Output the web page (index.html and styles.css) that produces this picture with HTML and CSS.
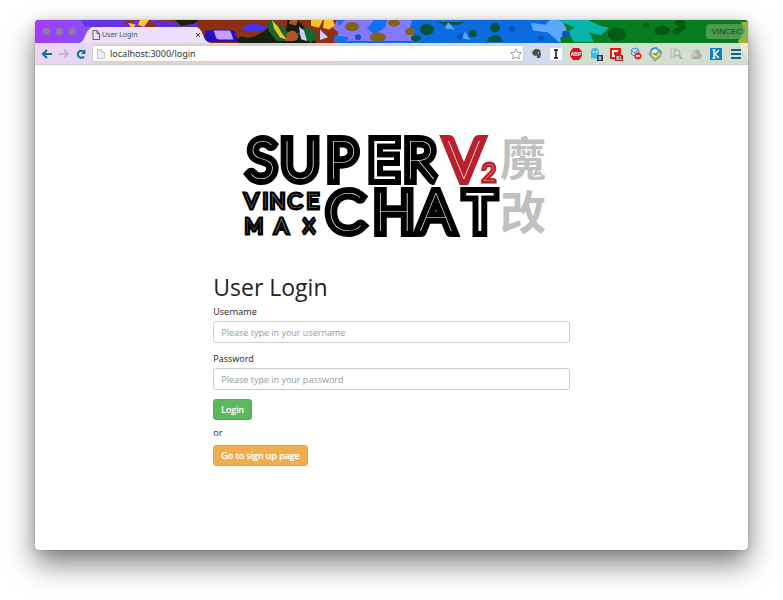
FILE: index.html
```html
<!DOCTYPE html>
<html lang="en">
<head>
<meta charset="utf-8">
<title>User Login</title>
<link rel="stylesheet" href="styles.css">
</head>
<body>
<div class="window">
  <header class="chrome">
    <svg class="theme" viewBox="0 0 713 46" preserveAspectRatio="none" aria-hidden="true">
      <defs>
        <linearGradient id="purple"><stop offset="0" stop-color="#a43cf5"/><stop offset="1" stop-color="#7a55ff"/></linearGradient>
      </defs>
      <rect width="713" height="46" fill="#0b6be0"/>
      <rect width="75" height="46" fill="url(#purple)"/>
      <path d="M60 0H302V46H60z" fill="#8c2f12"/>
      <path d="M46 0h34l8 5 14-5 10 4 15-4h-10l-7 7H50zM66 0h26l-7 7-8 2z" fill="#6632e8"/>
      <path d="M93 3l8 2-4 4zM105 0h9l-5 7-6-2zM289 0h9l2 6-6 4-6-2z" fill="#ffc72c"/>
      <path d="M120 3q14-5 22 1t14 0 8 6-18 3-26-4z" fill="#5a2fd8"/>
      <path d="M168 22l6 1h30l-5-12h-28z" fill="#2410c0"/>
      <path d="M207 8q9-6 17-3l8 2-5 5-17 0z" fill="#4633f2"/>
      <path d="M140 0h24l-5 4-13 2zM202 20q4-4 8-2t12-2 10-7 10 5 10-10 20 7 13 14l-15 10h-60z" fill="#17200d"/>
      <path d="M232 2q6-3 12 3t10 8l-4 9h-8l-8-10zM262 14l10-8 11 10-7 8z" fill="#17672b"/>
      <path d="M237 0l6 7 4 7 5 7-7-3-6-9zM276 0h12l-4 8-8-2z" fill="#f4c522"/>
      <path d="M252 14q6-6 10 0t-3 8h-9zM255 0h8l-2 6-7-2z" fill="#a8562a"/>
      <path d="M264 7l5 4 3 11-6-2zM285 10l8 8-8 3z" fill="#d1cafa"/>
      <path d="M302 0h75l-3 12 12 10h-86l4-9-6-4z" fill="#8579fb"/>
      <path d="M302 0h8l-6 6zM300 16l14 2-4 5h-12zM332 9l7-9h13l-2 8-10 7z" fill="#176eee"/>
      <g fill="#80621d"><ellipse cx="317" cy="7" rx="7" ry="5"/><ellipse cx="343" cy="18" rx="8" ry="5"/><ellipse cx="359" cy="3" rx="6" ry="4"/><ellipse cx="375" cy="12" rx="5" ry="4"/></g>
      <g fill="#07543a"><ellipse cx="392" cy="10" rx="7" ry="6"/><ellipse cx="381" cy="19" rx="5" ry="3"/><circle cx="438" cy="14" r="4"/><circle cx="460" cy="8" r="5"/><path d="M452 23q2-7 8-7t8 7zM403 2h26l-4 3h-17z"/></g>
      <path d="M413 2l7 8-10-1zM430 12l5 9-8-2zM496 3l14 2 5-5h13l9 9 4 12-17 2-11-10-15-2z" fill="#5aa8ff"/>
      <path d="M527 0H713V46H532l-7-27 8-6z" fill="#087d20"/>
      <path d="M522 0h31l12 6 9 2-8 8-12-3 5 10h-20l-6-11 7-4z" fill="#07b3aa"/>
      <g fill="#075815"><ellipse cx="582" cy="15" rx="9" ry="7"/><ellipse cx="627" cy="11" rx="8" ry="5"/><ellipse cx="645" cy="3" rx="6" ry="3"/><ellipse cx="611" cy="5" rx="3" ry="2"/><path d="M636 12l12-8 4 4-10 8z"/></g>
      <path d="M706 2h7v40l-10-20 7-10z" fill="#a7b330"/>
      <g fill="#0755b8"><circle cx="323" cy="18" r="3"/><circle cx="425" cy="17" r="3"/><circle cx="477" cy="9" r="3"/><circle cx="506" cy="19" r="3"/><circle cx="531" cy="15" r="4"/></g>
    </svg>
    <div class="tabs">
      <div class="lights"><i></i><i></i><i></i></div>
      <div class="tab">
        <svg class="tabshape" viewBox="0 0 132 17" preserveAspectRatio="none" aria-hidden="true"><path d="M0 17Q4 16 6 10T13 1H117Q121 1 124 9T132 17z" fill="#ece0f8"/></svg>
        <svg class="doc" viewBox="0 0 8 10" aria-hidden="true"><path d="M1 .5h4l2.500 3v6H1zM5 .5v3h2.500" fill="none" stroke="#655d6c"/></svg>
        <span class="tabname">User Login</span>
        <button class="close" aria-label="Close tab"><svg viewBox="0 0 6 6"><path d="M1 1l4 4M5 1L1 5" stroke="#4c4650"/></svg></button>
      </div>
      <button class="newtab" aria-label="New tab"><svg viewBox="0 0 24 12"><path d="M2 1h16q2 0 3 4l2 6H8q-3 0-4-4z" fill="#c79dff" stroke="#2c13c9"/></svg></button>
      <span class="profile">VINCEC</span>
    </div>
    <div class="toolbar">
      <button aria-label="Back"><svg viewBox="0 0 12 12"><path d="M11 6H2M6 2L2 6l4 4" fill="none" stroke="#08749b" stroke-width="2"/></svg></button>
      <button aria-label="Forward"><svg viewBox="0 0 12 12"><path d="M1 6h9M6 2l4 4-4 4" fill="none" stroke="#c4b6d0" stroke-width="2"/></svg></button>
      <button aria-label="Reload"><svg viewBox="0 0 12 12"><path d="M9 4A3.500 3.500 0 1 0 9 8.500" fill="none" stroke="#08749b" stroke-width="2"/><path d="M10.500 1v5H6z" fill="#08749b"/></svg></button>
      <div class="address">
        <svg class="doc" viewBox="0 0 8 10" aria-hidden="true"><path d="M.5.500h4l3 3v6h-7zM4.500.500v3h3" fill="#eee" stroke="#c4c4c4"/></svg>
        <input class="url" aria-label="Address" value="localhost:3000/login">
        <svg class="star" viewBox="0 0 12 12"><path d="M6 .8l1.600 3.400 3.700.5-2.700 2.600.7 3.700L6 9.200 2.700 11l.7-3.700L.7 4.700l3.700-.5z" fill="#fff" stroke="#a2a2a2"/></svg>
      </div>
      <div class="extensions">
        <svg viewBox="0 0 14 14"><path d="M3 5l3-3h3l2 1 1 4-1 4H8V9l1-1-2 1-3-1z" fill="#4b5149"/><path d="M9 6h1" stroke="#fff"/></svg>
        <svg viewBox="0 0 14 14"><path d="M1 1h12v12H1z" fill="#fff"/><path d="M5 3h4M7 3v8M5 11h4" stroke="#111" stroke-width="1.500"/></svg>
        <svg viewBox="0 0 14 14"><path d="M4 1h6l3 4v4l-3 4H4L1 9V5z" fill="#d3101c"/><text class="badge" x="7" y="9">ABP</text></svg>
        <svg viewBox="0 0 14 14"><path d="M2 12V5a4 4 0 0 1 8 0v7l-2-1-2 1-2-1z" fill="#42b9e9"/><path d="M4 5h1.500M7 5h1.500" stroke="#fff" stroke-width="1.500"/><rect x="8" y="8" width="6" height="6" fill="#3c344e"/><text class="badge" x="11" y="13">0</text></svg>
        <svg viewBox="0 0 14 14"><path d="M1 1h11v11H1z" fill="#dc1b13"/><path d="M9 4H4v5h4" fill="none" stroke="#fff" stroke-width="2"/><rect x="6" y="8" width="8" height="6" fill="#b71920"/><text class="badge" x="10" y="13">81</text></svg>
        <svg viewBox="0 0 14 14"><circle cx="6" cy="5" r="4" fill="#b9def5" stroke="#438fc5"/><path d="M3 4l3 2 3-3" fill="none" stroke="#438fc5"/><circle cx="9" cy="9" r="3.500" fill="#df2434"/><path d="M7 9h4" stroke="#fff" stroke-width="1.500"/></svg>
        <svg viewBox="0 0 14 14"><path d="M3 2l4-1 5 4-1 4-5 4-5-6z" fill="#fff" stroke="#4c8fd0" stroke-width="2" stroke-linejoin="round"/><path d="M2 7l4 5 6-5" fill="none" stroke="#e6b42d" stroke-width="2"/><path d="M4 6l3 2 4-5" fill="none" stroke="#50aa64" stroke-width="2"/></svg>
        <svg viewBox="0 0 14 14"><path d="M8 2H2v8h5" fill="none" stroke="#bbb8ab"/><circle cx="8" cy="6" r="3" fill="none" stroke="#aaa99e"/><path d="M10 8l3 4" stroke="#aaa99e" stroke-width="2"/></svg>
        <svg viewBox="0 0 14 14"><path d="M5 2h4l4 7-2 3H3L1 9z" fill="#cbc8c2"/><path d="M9 2l4 7H9L6 4zM3 12l2-3h8l-2 3z" fill="#b1aeaa"/></svg>
        <svg viewBox="0 0 14 14"><path d="M1 1h12v12H1z" fill="#087dc5"/><path d="M5 3v8M10 3L6 7l4 4M3.500 3h3M3.500 11h3" fill="none" stroke="#fff" stroke-width="1.500"/></svg>
        <svg viewBox="0 0 14 14"><path d="M2 3h10M2 7h10M2 11h10" stroke="#17628c" stroke-width="2"/></svg>
      </div>
    </div>
  </header>
  <main class="page">
    <svg class="logo" viewBox="-7 0 312 108" role="img" aria-label="Super Vince Max Chat V2">
      <text class="big" x="5 38 84 126 161" y="45">SUP<tspan class="narrow">E</tspan>R</text>
      <text class="big" x="84 131 176 223" y="97">CHA<tspan class="narrow">T</tspan></text>
      <text class="big red" x="204" y="45">V</text>
      <text class="two red" x="239" y="47">2</text>
      <text class="small" x="2 20 27 45 64" y="74">VINCE</text>
      <text class="small" x="2 32 60" y="99">MAX</text>
      <text class="cjk" x="257" y="41">魔</text>
      <text class="cjk" x="257" y="95">改</text>
    </svg>
    <h1>User Login</h1>
    <form>
      <label for="username">Username</label>
      <input class="field" id="username" type="text" placeholder="Please type in your username">
      <label for="password">Password</label>
      <input class="field" id="password" type="password" placeholder="Please type in your password">
      <button class="btn green" type="submit">Login</button>
      <p>or</p>
      <a class="btn orange" href="#signup">Go to sign up page</a>
    </form>
  </main>
</div>
</body>
</html>
```
FILE: styles.css
```css
* { box-sizing: border-box; }
body { margin: 0; min-height: 100vh; padding: 20px 35px 50px; display: flex; background: #fff; font-family: "Open Sans", sans-serif; color: #222; }
svg { display: block; }
button { border: 0; padding: 0; background: none; font: inherit; }
.window { flex: 1; display: flex; flex-direction: column; min-width: 0; border-radius: 4px; overflow: hidden; background: #fff; box-shadow: 0 0 1px rgba(0,0,0,.5), 0 0 12px rgba(0,0,0,.1), 0 14px 28px rgba(0,0,0,.5); }
.chrome { position: relative; isolation: isolate; overflow: hidden; border-bottom: 1px solid #cfc8cd; }
.theme { position: absolute; inset: 0; width: 100%; height: 100%; z-index: -1; }
.tabs { height: 23px; display: flex; align-items: flex-end; }
.lights { width: 44px; padding-left: 8px; display: flex; align-self: center; gap: 6px; }
.lights i { width: 7px; height: 7px; border-radius: 50%; background: #947d9d; }
.tab { position: relative; isolation: isolate; width: 132px; height: 17px; padding: 0 10px 0 13px; display: flex; align-items: center; gap: 2px; }
.tabshape { position: absolute; inset: 0; width: 100%; height: 100%; z-index: -1; }
.doc { width: 8px; height: 10px; flex: none; }
.tabname { flex: 1; font: 7px "Noto Sans", sans-serif; color: #514958; }
.close, .close svg { width: 6px; height: 6px; }
.newtab { margin-bottom: 2px; }
.newtab svg { width: 24px; height: 12px; }
.profile { margin-left: auto; align-self: center; padding: 3px 6px; border-radius: 3px; background: rgba(122,174,112,.6); font: 8px "Liberation Sans", sans-serif; color: #173b14; }
.toolbar { height: 21px; display: flex; align-items: center; gap: 5px; padding: 0 5px 0 6px; background: rgba(249,242,240,.84); }
.toolbar button, .toolbar button svg { width: 12px; height: 12px; }
.address { flex: 1; min-width: 0; height: 17px; display: flex; align-items: center; gap: 5px; padding: 0 1px 0 4px; background: #fff; border: 1px solid #d4cfd5; border-radius: 2px; }
.url { flex: 1; min-width: 0; border: 0; padding: 0; outline: 0; font: 9px "Noto Sans", sans-serif; color: #333; background: none; }
.star { width: 12px; height: 12px; }
.extensions { display: flex; gap: 6px; }
.extensions svg { width: 14px; height: 14px; }
.badge { font: bold 5px "Liberation Sans", sans-serif; fill: #fff; text-anchor: middle; }
.page { width: 50%; margin: 0 auto; padding: 69px 0 0; font-size: 9px; line-height: 14px; }
.logo { width: 312px; max-width: 100%; margin: 0 auto 32px; overflow: visible; }
.big, .small, .two { fill: #fff; stroke: #000; stroke-miterlimit: 2; paint-order: stroke; }
.big { font: 100 53px Lato, sans-serif; stroke-width: 12px; }
.narrow { font-family: "Open Sans", sans-serif; font-weight: 300; }
.two { font: 100 24px Lato, sans-serif; stroke-width: 5px; }
.small { font: 100 20px Lato, sans-serif; stroke-width: 5px; }
.red { stroke: #b8202c; }
.cjk { font: bold 46px "Noto Sans CJK TC", sans-serif; fill: #c0c0c0; }
h1 { margin: 0 0 5px; font-size: 23px; line-height: 26px; font-weight: 400; }
form { margin: 0; }
label { display: block; line-height: 14px; margin-bottom: 2px; }
.field { display: block; width: 100%; height: 22px; margin: 0 0 9px; padding: 0 7px; border: 1px solid #ccc; border-radius: 3px; font: 9px "Open Sans", sans-serif; color: #555; }
.field::placeholder { color: #999; }
.btn { display: inline-block; height: 21px; padding: 0 7px; border: 1px solid; border-radius: 3px; font-size: 9px; line-height: 19px; font-weight: 400; color: #fff; text-decoration: none; text-shadow: 0 0 1px #fff; }
.green { background: #5cb85c; border-color: #4cae4c; }
.orange { background: #f0ad4e; border-color: #eea236; }
p { margin: 6px 0 5px; }
```
